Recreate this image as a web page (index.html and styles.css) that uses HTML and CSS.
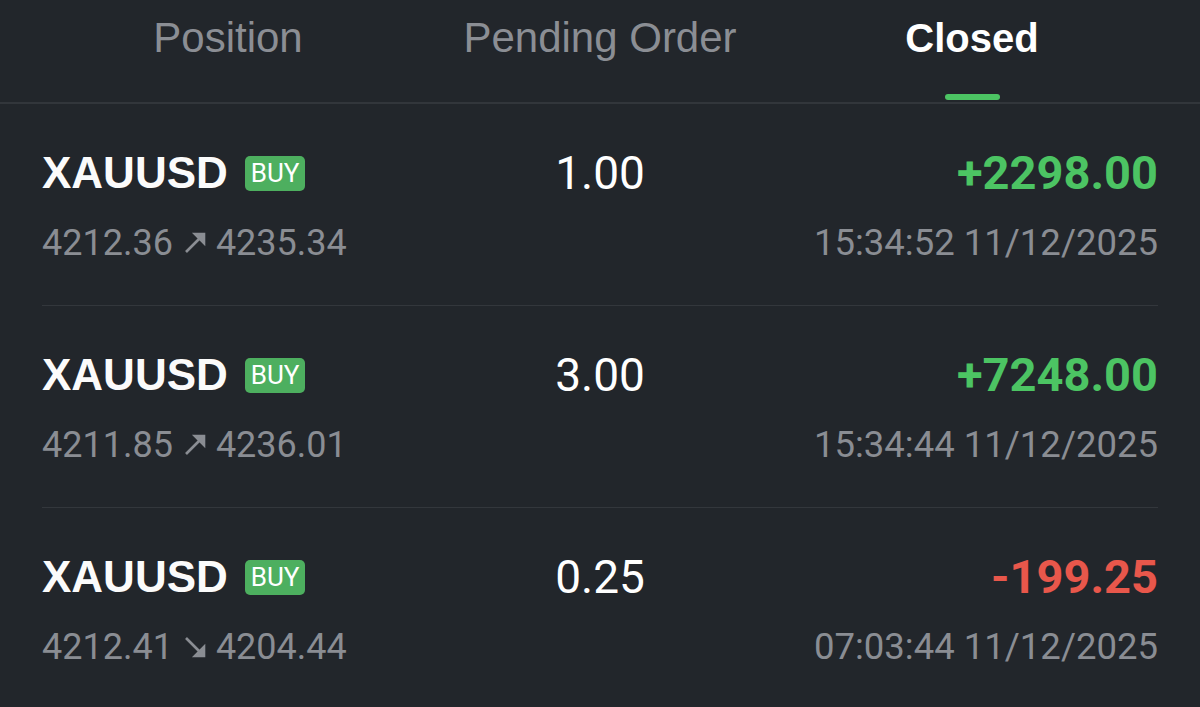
FILE: index.html
```html
<!DOCTYPE html>
<html lang="en">
<head>
  <meta charset="UTF-8" />
  <meta name="viewport" content="width=device-width, initial-scale=1.0"/>
  <title>Closed Orders</title>
  <link rel="stylesheet" href="styles.css">
</head>
<body>
  <div class="screen">
    <div class="tabs">
      <div class="tab">
        <span class="tab-label">Position</span>
      </div>
      <div class="tab">
        <span class="tab-label">Pending Order</span>
      </div>
      <div class="tab active">
        <span class="tab-label">Closed</span>
        <span class="tab-indicator"></span>
      </div>
    </div>

    <div class="orders">
      <div class="order">
        <div class="order-left">
          <div class="symbol-line">
            <span class="symbol">XAUUSD</span>
            <span class="badge">BUY</span>
          </div>
          <div class="prices">
            <span>4212.36</span>
            <svg class="arrow" viewBox="0 0 24 24"><line x1="3" y1="21" x2="17" y2="7"/><polygon points="21,3 21,12 12,3"/></svg>
            <span>4235.34</span>
          </div>
        </div>
        <div class="volume">1.00</div>
        <div class="order-right">
          <div class="profit up">+2298.00</div>
          <div class="time">15:34:52 11/12/2025</div>
        </div>
      </div>

      <div class="order">
        <div class="order-left">
          <div class="symbol-line">
            <span class="symbol">XAUUSD</span>
            <span class="badge">BUY</span>
          </div>
          <div class="prices">
            <span>4211.85</span>
            <svg class="arrow" viewBox="0 0 24 24"><line x1="3" y1="21" x2="17" y2="7"/><polygon points="21,3 21,12 12,3"/></svg>
            <span>4236.01</span>
          </div>
        </div>
        <div class="volume">3.00</div>
        <div class="order-right">
          <div class="profit up">+7248.00</div>
          <div class="time">15:34:44 11/12/2025</div>
        </div>
      </div>

      <div class="order">
        <div class="order-left">
          <div class="symbol-line">
            <span class="symbol">XAUUSD</span>
            <span class="badge">BUY</span>
          </div>
          <div class="prices">
            <span>4212.41</span>
            <svg class="arrow" viewBox="0 0 24 24"><line x1="3" y1="3" x2="17" y2="17"/><polygon points="21,21 21,12 12,21"/></svg>
            <span>4204.44</span>
          </div>
        </div>
        <div class="volume">0.25</div>
        <div class="order-right">
          <div class="profit down">-199.25</div>
          <div class="time">07:03:44 11/12/2025</div>
        </div>
      </div>
    </div>
  </div>
</body>
</html>
```

FILE: styles.css
```css
* {
    margin: 0;
    padding: 0;
    box-sizing: border-box;
}
body {
    background: #22262b;
    font-family: Roboto, 'Liberation Sans', sans-serif;
    color: #ffffff;
    overflow: hidden;
}
.screen {
    width: 1200px;
    height: 707px;
}
.tabs {
    display: flex;
    padding: 0 42px;
    height: 104px;
    border-bottom: 2px solid #32363b;
}
.tab {
    flex: 1;
    display: flex;
    flex-direction: column;
    align-items: center;
    padding-top: 13px;
}
.tab-label {
    font-family: 'Liberation Sans', Arial, sans-serif;
    font-size: 42px;
    line-height: 50px;
    color: #8b8e94;
}
.tab.active .tab-label {
    color: #ffffff;
    font-weight: 700;
    font-size: 40px;
}
.tab-indicator {
    margin-top: auto;
    margin-bottom: 2px;
    width: 55px;
    height: 6px;
    border-radius: 3px;
    background: #4cc463;
}
.orders {
    padding: 0 42px;
}
.order {
    display: grid;
    grid-template-columns: 1fr auto 1fr;
    padding: 44px 0 42px;
    border-bottom: 1px solid #33373c;
}
.order:last-child {
    border-bottom: none;
}
.symbol-line {
    display: flex;
    align-items: center;
    height: 50px;
}
.symbol {
    font-family: 'Liberation Sans', Arial, sans-serif;
    font-weight: 700;
    font-size: 44px;
    line-height: 50px;
    color: #fbfbfb;
}
.badge {
    margin-left: 17px;
    height: 35px;
    padding: 0 6px;
    border-radius: 5px;
    background: #4daf5f;
    color: #ffffff;
    font-size: 26px;
    line-height: 35px;
    display: inline-flex;
    align-items: center;
}
.prices {
    margin-top: 25px;
    display: flex;
    align-items: center;
    height: 40px;
    font-size: 36px;
    line-height: 40px;
    color: #8a8d93;
}
.arrow {
    width: 24px;
    height: 24px;
    margin: 0 9px 0 10px;
    stroke: #8a8d93;
    stroke-width: 2.6;
    fill: #8a8d93;
}
.volume {
    font-size: 46px;
    line-height: 50px;
    height: 50px;
    text-align: center;
    color: #ffffff;
}
.order-right {
    text-align: right;
}
.profit {
    font-weight: 700;
    font-size: 47px;
    line-height: 50px;
}
.profit.up {
    color: #4cc463;
}
.profit.down {
    color: #e8574b;
}
.time {
    margin-top: 25px;
    font-size: 36.5px;
    line-height: 40px;
    color: #8a8d93;
}
```
